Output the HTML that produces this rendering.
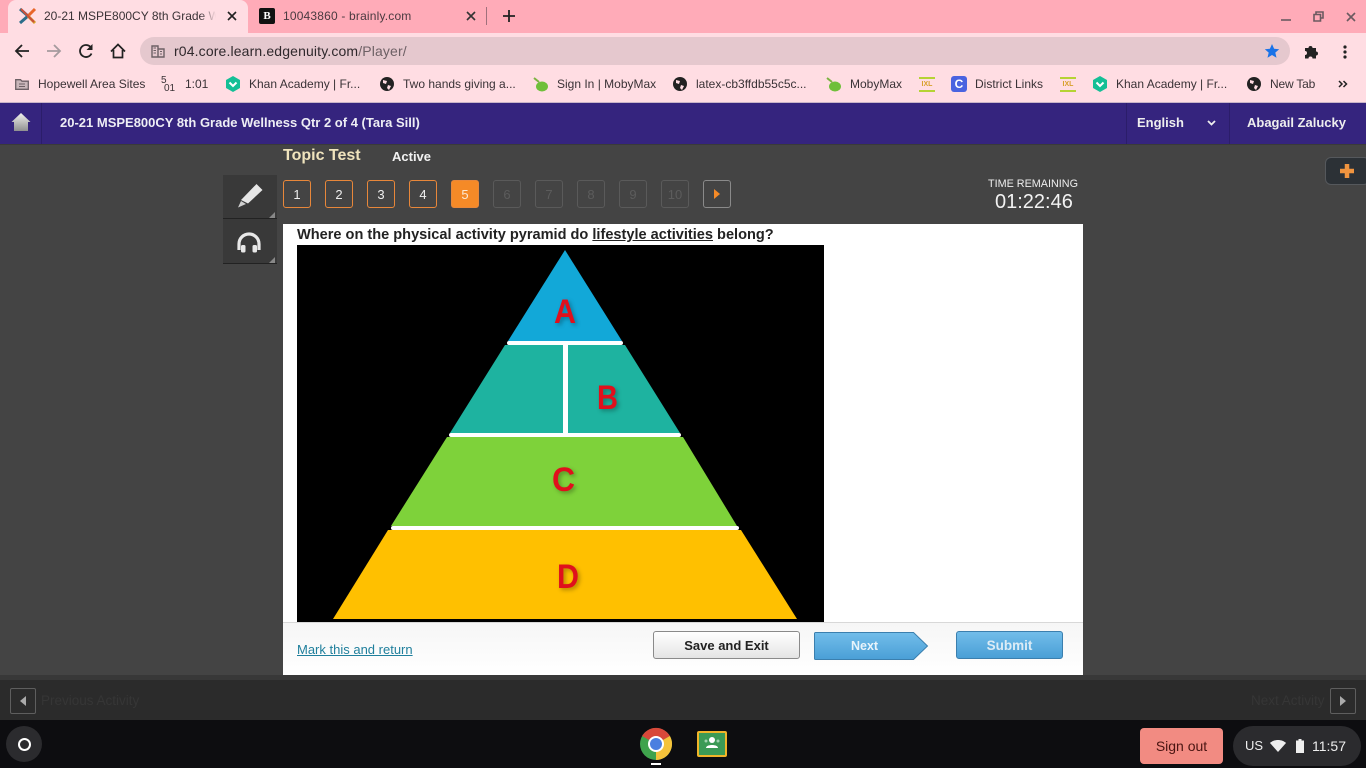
<!DOCTYPE html>
<html><head><meta charset="utf-8"><title>Topic Test</title>
<style>
html,body{margin:0;padding:0;width:1366px;height:768px;overflow:hidden;background:#444;font-family:"Liberation Sans",sans-serif}
.a{position:absolute;white-space:nowrap}
svg{position:absolute;overflow:visible}
.bm{position:absolute;top:76px;font-size:12px;line-height:16px;color:#3a3236;white-space:nowrap}
.n{position:absolute;top:180px;width:26px;height:26px;border:1px solid #e8873a;border-radius:3px;color:#eee;font-size:13px;line-height:27px;text-align:center}
.n.d{border-color:#5a5a5a;color:#5c5c5c}
</style></head><body>
<!-- tab strip -->
<div class="a" style="left:0;top:0;width:1366px;height:33px;background:#ffabb8"></div>
<div class="a" style="left:8px;top:0;width:240px;height:33px;background:#ffdde3;border-radius:8px 8px 0 0"></div>
<svg style="left:19px;top:8px" width="18" height="16" viewBox="0 0 18 16"><path d="M1 1L9 8 1 15" fill="none" stroke="#2c6d8a" stroke-width="3"/><path d="M16 1L9 8" stroke="#e8662a" stroke-width="3"/><path d="M9 8L16 15" stroke="#d8a02a" stroke-width="3"/><path d="M2 1L15 14" stroke="#c9503a" stroke-width="2"/></svg>
<div class="a" style="left:44px;top:8px;width:175px;overflow:hidden;font-size:12px;line-height:16px;color:#3a3236">20-21 MSPE800CY 8th Grade We</div>
<div class="a" style="left:200px;top:6px;width:20px;height:20px;background:linear-gradient(90deg,rgba(255,221,227,0),#ffdde3 80%)"></div>
<svg style="left:227px;top:11px" width="10" height="10"><path d="M1 1L9 9M9 1L1 9" stroke="#222" stroke-width="1.6"/></svg>
<div class="a" style="left:259px;top:8px;width:16px;height:16px;background:#111;border-radius:2px;color:#fff;font:bold 11px/16px 'Liberation Serif',serif;text-align:center">B</div>
<div class="a" style="left:283px;top:8px;font-size:12px;line-height:16px;letter-spacing:.18px;color:#4a3a40">10043860 - brainly.com</div>
<svg style="left:466px;top:11px" width="10" height="10"><path d="M1 1L9 9M9 1L1 9" stroke="#333" stroke-width="1.6"/></svg>
<div class="a" style="left:486px;top:7px;width:1px;height:18px;background:#a0707c"></div>
<svg style="left:503px;top:10px" width="12" height="12"><path d="M6 0V12M0 6H12" stroke="#222" stroke-width="1.8"/></svg>
<svg style="left:1281px;top:15px" width="11" height="6"><path d="M0 5H10" stroke="#6b5a60" stroke-width="1.6"/></svg>
<svg style="left:1313px;top:11px" width="11" height="11"><path d="M3 3V1H10V7H8M1 3.5H7.5V10H1Z" fill="none" stroke="#6b5a60" stroke-width="1.6"/></svg>
<svg style="left:1346px;top:12px" width="10" height="10"><path d="M1 1L9 9M9 1L1 9" stroke="#6b5a60" stroke-width="1.6"/></svg>
<!-- toolbar -->
<div class="a" style="left:0;top:33px;width:1366px;height:69px;background:#ffdde3"></div>
<div class="a" style="left:0;top:102px;width:1366px;height:1px;background:#c8b4c8"></div>
<svg style="left:14px;top:43px" width="16" height="16" viewBox="0 0 16 16"><path d="M15 8H2M8 2L2 8 8 14" fill="none" stroke="#222" stroke-width="1.8"/></svg>
<svg style="left:46px;top:43px" width="16" height="16" viewBox="0 0 16 16"><path d="M1 8H14M8 2L14 8 8 14" fill="none" stroke="#a59a9e" stroke-width="1.8"/></svg>
<svg style="left:78px;top:43px" width="16" height="16" viewBox="0 0 16 16"><path d="M13.5 10.5A6 6 0 1 1 12.3 3.8" fill="none" stroke="#222" stroke-width="1.8"/><path d="M14.5 1V7H8.5Z" fill="#222"/></svg>
<svg style="left:110px;top:43px" width="16" height="16" viewBox="0 0 16 16"><path d="M1 8.5L8 1.5 15 8.5M3.5 7V14.5H12.500V7" fill="none" stroke="#222" stroke-width="1.7"/></svg>
<div class="a" style="left:140px;top:37px;width:1150px;height:28px;background:#e5c8ce;border-radius:14px"></div>
<svg style="left:151px;top:45px" width="14" height="13" viewBox="0 0 14 13"><path d="M1 1H7V12H1ZM7 4H13V12H7Z" fill="none" stroke="#6d6065" stroke-width="1.4"/><path d="M2.500 3H5M2.500 5.500H5M2.500 8H5M9 6.500H11M9 9H11" stroke="#6d6065"/></svg>
<div class="a" style="left:174px;top:43px;font-size:14px;line-height:16px;letter-spacing:.14px;color:#2f282c">r04.core.learn.edgenuity.com<span style="color:#6d6065">/Player/</span></div>
<svg style="left:1264px;top:43px" width="16" height="16" viewBox="0 0 16 16"><path d="M8 1L10.100 5.800 15.200 6.200 11.300 9.600 12.500 14.700 8 12 3.500 14.700 4.700 9.600.8 6.200 5.900 5.800Z" fill="#1a73e8"/></svg>
<svg style="left:1304px;top:44px" width="15" height="15" viewBox="0 0 15 15"><path d="M1 4H4.500A2 2 0 0 1 8.500 4H12V7.500A2 2 0 0 1 12 11.500V14.500H8.500A2 2 0 0 0 4.500 14.500H1V11A2 2 0 0 0 1 7Z" fill="#222"/></svg>
<svg style="left:1343px;top:45px" width="4" height="14"><circle cx="2" cy="2" r="1.600" fill="#222"/><circle cx="2" cy="7" r="1.600" fill="#222"/><circle cx="2" cy="12" r="1.600" fill="#222"/></svg>
<!-- bookmarks -->
<svg style="left:15px;top:79px" width="14" height="11" viewBox="0 0 14 11"><path d="M.7.7H5.500L7 2.200H13.300V10.300H.7Z" fill="#c9b6ba" stroke="#6d6065" stroke-width="1.300"/><path d="M4 5H10M4 7.500H10" stroke="#6d6065"/></svg>
<div class="bm" style="left:38px">Hopewell Area Sites</div>
<div class="a" style="left:161px;top:76px;font-size:10px;line-height:10px;color:#3a3236">5</div>
<div class="a" style="left:164px;top:84px;font-size:10px;line-height:10px;color:#3a3236">01</div>
<div class="bm" style="left:185px">1:01</div>
<svg style="left:226px;top:76px" width="14" height="16" viewBox="0 0 14 16"><path d="M7 0L14 4V12L7 16 0 12V4Z" fill="#14bf96"/><path d="M3.500 6.500L7 10 10.500 6.500" fill="none" stroke="#fff" stroke-width="2"/></svg>
<div class="bm" style="left:249px">Khan Academy | Fr...</div>
<svg style="left:380px;top:77px" width="14" height="14" viewBox="0 0 14 14"><circle cx="7" cy="7" r="7" fill="#222"/><path d="M3 3L7 4 6 7 3 6ZM8 8L11 9 9 13 7 11Z" fill="#ffdde3"/></svg>
<div class="bm" style="left:403px">Two hands giving a...</div>
<svg style="left:533px;top:77px" width="16" height="15" viewBox="0 0 16 15"><path d="M1 1L6 5" stroke="#7cb342" stroke-width="2"/><ellipse cx="9" cy="9.500" rx="6" ry="5" fill="#6fbf3a"/></svg>
<div class="bm" style="left:557px">Sign In | MobyMax</div>
<svg style="left:673px;top:77px" width="14" height="14" viewBox="0 0 14 14"><circle cx="7" cy="7" r="7" fill="#222"/><path d="M3 3L7 4 6 7 3 6ZM8 8L11 9 9 13 7 11Z" fill="#ffdde3"/></svg>
<div class="bm" style="left:696px">latex-cb3ffdb55c5c...</div>
<svg style="left:826px;top:77px" width="16" height="15" viewBox="0 0 16 15"><path d="M1 1L6 5" stroke="#7cb342" stroke-width="2"/><ellipse cx="9" cy="9.500" rx="6" ry="5" fill="#6fbf3a"/></svg>
<div class="bm" style="left:850px">MobyMax</div>
<div class="a" style="left:919px;top:77px;width:16px;height:11px;border-top:2px solid #b5d334;border-bottom:2px solid #b5d334;font:bold 7px/11px 'Liberation Sans',sans-serif;color:#d8a02a;text-align:center">IXL</div>
<div class="a" style="left:951px;top:76px;width:16px;height:16px;background:#4a63e0;border-radius:3px;color:#fff;font:bold 12px/16px 'Liberation Sans',sans-serif;text-align:center">C</div>
<div class="bm" style="left:975px">District Links</div>
<div class="a" style="left:1060px;top:77px;width:16px;height:11px;border-top:2px solid #b5d334;border-bottom:2px solid #b5d334;font:bold 7px/11px 'Liberation Sans',sans-serif;color:#d8a02a;text-align:center">IXL</div>
<svg style="left:1093px;top:76px" width="14" height="16" viewBox="0 0 14 16"><path d="M7 0L14 4V12L7 16 0 12V4Z" fill="#14bf96"/><path d="M3.500 6.500L7 10 10.500 6.500" fill="none" stroke="#fff" stroke-width="2"/></svg>
<div class="bm" style="left:1116px">Khan Academy | Fr...</div>
<svg style="left:1247px;top:77px" width="14" height="14" viewBox="0 0 14 14"><circle cx="7" cy="7" r="7" fill="#222"/><path d="M3 3L7 4 6 7 3 6ZM8 8L11 9 9 13 7 11Z" fill="#ffdde3"/></svg>
<div class="bm" style="left:1270px;letter-spacing:-.2px">New Tab</div>
<svg style="left:1338px;top:80px" width="10" height="8"><path d="M1 1L4 4 1 7M5.500 1L8.500 4 5.500 7" fill="none" stroke="#222" stroke-width="1.500"/></svg>
<!-- app header -->
<div class="a" style="left:0;top:103px;width:1366px;height:41px;background:#35247e"></div>
<div class="a" style="left:0;top:144px;width:1366px;height:1px;background:#3a3a3a"></div>
<div class="a" style="left:41px;top:103px;width:1px;height:41px;background:#2b1d6a"></div>
<div class="a" style="left:1126px;top:103px;width:1px;height:41px;background:#2b1d6a"></div>
<div class="a" style="left:1229px;top:103px;width:1px;height:41px;background:#2b1d6a"></div>
<svg style="left:11px;top:112px" width="20" height="20" viewBox="0 0 20 20"><defs><linearGradient id="h" x1="0" y1="0" x2="0" y2="1"><stop offset="0" stop-color="#f2f2ee"/><stop offset="1" stop-color="#8f9090"/></linearGradient></defs><path d="M10 1L19.500 10H17V19H3V10H.5Z" fill="url(#h)"/></svg>
<div class="a" style="left:60px;top:115px;font-size:13px;line-height:16px;font-weight:bold;color:#eeeef5">20-21 MSPE800CY 8th Grade Wellness Qtr 2 of 4 (Tara Sill)</div>
<div class="a" style="left:1137px;top:115px;font-size:13px;line-height:16px;font-weight:bold;color:#eee">English</div>
<svg style="left:1207px;top:120px" width="9" height="7"><path d="M1 1L4.500 4.500 8 1" fill="none" stroke="#eee" stroke-width="1.800"/></svg>
<div class="a" style="left:1247px;top:115px;font-size:13px;line-height:16px;font-weight:bold;color:#eee">Abagail Zalucky</div>
<!-- top area -->
<div class="a" style="left:283px;top:146px;font-size:16px;line-height:20px;font-weight:bold;color:#f0e4bd">Topic Test</div>
<div class="a" style="left:392px;top:148px;font-size:13px;line-height:17px;font-weight:bold;color:#f2f2f2">Active</div>
<div class="a" style="left:223px;top:175px;width:54px;height:43px;background:#393939;border-bottom:1px solid #222"></div>
<div class="a" style="left:223px;top:219px;width:54px;height:44px;background:#393939;border-bottom:1px solid #222"></div>
<svg style="left:236px;top:183px" width="28" height="26" viewBox="0 0 28 26"><path d="M20.500 1L26.500 7 12 20.500 5 17Z" fill="#e6e6e6"/><path d="M5 18L2 24.500 10 21Z" fill="#cfcfcf"/></svg>
<svg style="left:269px;top:212px" width="6" height="6"><path d="M6 0V6H0Z" fill="#888"/></svg>
<svg style="left:269px;top:257px" width="6" height="6"><path d="M6 0V6H0Z" fill="#888"/></svg>
<svg style="left:236px;top:231px" width="26" height="22" viewBox="0 0 26 22"><path d="M3 19V13A10 10 0 0 1 23 13V19" fill="none" stroke="#e8e8e8" stroke-width="3.200"/><rect x="5" y="14" width="4.500" height="7.500" rx="1.500" fill="#e8e8e8"/><rect x="16.500" y="14" width="4.500" height="7.500" rx="1.500" fill="#e8e8e8"/></svg>
<div class="n" style="left:283px">1</div><div class="n" style="left:325px">2</div><div class="n" style="left:367px">3</div><div class="n" style="left:409px">4</div>
<div class="n" style="left:451px;background:#f58a27;color:#fde9d2">5</div>
<div class="n d" style="left:493px">6</div><div class="n d" style="left:535px">7</div><div class="n d" style="left:577px">8</div><div class="n d" style="left:619px">9</div><div class="n d" style="left:661px">10</div>
<div class="n" style="left:703px;border-color:#8a8a8a"></div>
<svg style="left:714px;top:189px" width="6" height="10"><path d="M0 0L6 5 0 10Z" fill="#f58a27"/></svg>
<div class="a" style="left:988px;top:177px;font-size:10.800px;line-height:14px;color:#eee">TIME REMAINING</div>
<div class="a" style="left:995px;top:190px;font-size:20px;line-height:24px;color:#f2f2f2">01:22:46</div>
<div class="a" style="left:1325px;top:157px;width:45px;height:28px;background:#2c3136;border:1px solid #55585c;border-radius:6px;box-sizing:border-box"></div>
<svg style="left:1340px;top:164px" width="14" height="14"><path d="M7 0V14M0 7H14" stroke="#f0943f" stroke-width="4.500"/></svg>
<!-- content -->
<div class="a" style="left:283px;top:224px;width:800px;height:398px;background:#fff"></div>
<div class="a" style="left:297px;top:225px;font-size:14.570px;line-height:18px;padding-top:1px;font-weight:bold;color:#222">Where on the physical activity pyramid do <u>lifestyle activities</u> belong?</div>
<svg style="left:297px;top:245px" width="527" height="377" viewBox="297 245 527 377">
<rect x="297" y="245" width="527" height="377" fill="#000"/>
<path d="M565 250L622 341H508Z" fill="#12a8d8"/>
<path d="M505 345H625L680 433H450Z" fill="#1eb3a0"/>
<path d="M447 437H683L737 526H391Z" fill="#7ed23a"/>
<path d="M388 530H741L797 619H333Z" fill="#ffc000"/>
<rect x="507" y="341" width="116" height="4" rx="2" fill="#fff"/>
<rect x="563" y="345" width="5" height="88" fill="#fff"/>
<rect x="449" y="433" width="232" height="4" rx="2" fill="#fff"/>
<rect x="391" y="526" width="348" height="4" rx="2" fill="#fff"/>
<g font-family="Liberation Sans" font-weight="bold" font-size="34" fill="#e0101c" style="filter:drop-shadow(2px 2px 2px rgba(0,0,0,.3))">
<text x="554" y="323" textLength="22" lengthAdjust="spacingAndGlyphs">A</text><text x="597" y="409" textLength="21" lengthAdjust="spacingAndGlyphs">B</text><text x="552" y="491" textLength="23" lengthAdjust="spacingAndGlyphs">C</text><text x="557" y="588" textLength="22" lengthAdjust="spacingAndGlyphs">D</text></g>
</svg>
<!-- footer of content -->
<div class="a" style="left:283px;top:622px;width:800px;height:53px;background:linear-gradient(#f6f6f6,#fff);border-top:1px solid #d8d8d8;box-sizing:border-box"></div>
<div class="a" style="left:297px;top:642px;font-size:13px;line-height:16px;color:#1f7f9c;text-decoration:underline">Mark this and return</div>
<div class="a" style="left:653px;top:631px;width:147px;height:28px;box-sizing:border-box;border:1px solid #8a8a8a;border-radius:3px;background:linear-gradient(#fff,#e4e4e4);font-size:13px;line-height:28px;font-weight:bold;color:#222;text-align:center">Save and Exit</div>
<svg style="left:814px;top:632px" width="115" height="28" viewBox="0 0 115 28"><defs><linearGradient id="b" x1="0" y1="0" x2="0" y2="1"><stop offset="0" stop-color="#72bdea"/><stop offset="1" stop-color="#4a9fd6"/></linearGradient></defs><path d="M1.500.5H99.500L113.500 14 99.500 27.500H1.500A1 1 0 0 1 .5 26.500V1.500A1 1 0 0 1 1.500.5Z" fill="url(#b)" stroke="#3b7fae"/></svg>
<div class="a" style="left:851px;top:638px;font-size:12.500px;line-height:16px;font-weight:bold;color:#e8f4fb">Next</div>
<div class="a" style="left:956px;top:631px;width:107px;height:28px;box-sizing:border-box;border:1px solid #3b7fae;border-radius:3px;background:linear-gradient(#72bdea,#4a9fd6);font-size:13.500px;line-height:28px;font-weight:bold;color:#dcecf6;text-align:center">Submit</div>
<!-- activity bar -->
<div class="a" style="left:0;top:675px;width:1366px;height:5px;background:#383838"></div>
<div class="a" style="left:0;top:680px;width:1366px;height:40px;background:#2b2b2b"></div>
<div class="a" style="left:10px;top:688px;width:26px;height:26px;box-sizing:border-box;border:1px solid #5e5e5e;border-radius:2px"></div>
<svg style="left:20px;top:696px" width="6" height="10"><path d="M6 0L0 5 6 10Z" fill="#aaa"/></svg>
<div class="a" style="left:41px;top:693px;font-size:13.500px;line-height:16px;color:#363636">Previous Activity</div>
<div class="a" style="left:1251px;top:693px;font-size:13.500px;line-height:16px;color:#363636">Next Activity</div>
<div class="a" style="left:1330px;top:688px;width:26px;height:26px;box-sizing:border-box;border:1px solid #5e5e5e;border-radius:2px"></div>
<svg style="left:1340px;top:696px" width="6" height="10"><path d="M0 0L6 5 0 10Z" fill="#aaa"/></svg>
<!-- shelf -->
<div class="a" style="left:0;top:720px;width:1366px;height:48px;background:#0d0d10"></div>
<div class="a" style="left:6px;top:726px;width:36px;height:36px;border-radius:18px;background:#2b2b2e"></div>
<div class="a" style="left:18px;top:738px;width:9px;height:9px;border:2px solid #fff;border-radius:50%"></div>
<svg style="left:640px;top:728px" width="32" height="32" viewBox="0 0 32 32"><circle cx="16" cy="16" r="16" fill="#3fa34d"/><path d="M16 16L2.100 8A16 16 0 0 1 29.900 8Z" fill="#d8483a"/><path d="M16 16L29.900 8A16 16 0 0 1 16 32Z" fill="#f5c33b"/><circle cx="16" cy="16" r="8" fill="#fff"/><circle cx="16" cy="16" r="6" fill="#4a7fe0"/></svg>
<div class="a" style="left:651px;top:763px;width:10px;height:2px;background:#fff"></div>
<div class="a" style="left:697px;top:731px;width:30px;height:26px;box-sizing:border-box;background:#3b9a55;border:2px solid #f0b429;border-radius:2px"></div>
<svg style="left:703px;top:735px" width="18" height="15" viewBox="0 0 18 15"><circle cx="9" cy="5" r="3" fill="#fff"/><path d="M3 13C3 9 15 9 15 13Z" fill="#fff"/><circle cx="3" cy="6" r="1.500" fill="#9fd2ae"/><circle cx="15" cy="6" r="1.500" fill="#9fd2ae"/></svg>
<div class="a" style="left:1140px;top:728px;width:83px;height:36px;background:#f28b82;border-radius:4px;font-size:14px;line-height:36px;text-align:center;color:#4a1512">Sign out</div>
<div class="a" style="left:1233px;top:726px;width:128px;height:40px;background:#2b2b2e;border-radius:20px"></div>
<div class="a" style="left:1245px;top:738px;font-size:13px;line-height:16px;color:#eee">US</div>
<svg style="left:1270px;top:740px" width="16" height="12" viewBox="0 0 16 12"><path d="M0 3C4-1 12-1 16 3L8 12Z" fill="#eee"/></svg>
<svg style="left:1296px;top:739px" width="8" height="14" viewBox="0 0 8 14"><path d="M2.500 0H5.500V1.500H8V14H0V1.500H2.500Z" fill="#eee"/></svg>
<div class="a" style="left:1312px;top:738px;font-size:14px;line-height:16px;color:#eee">11:57</div>
</body></html>
